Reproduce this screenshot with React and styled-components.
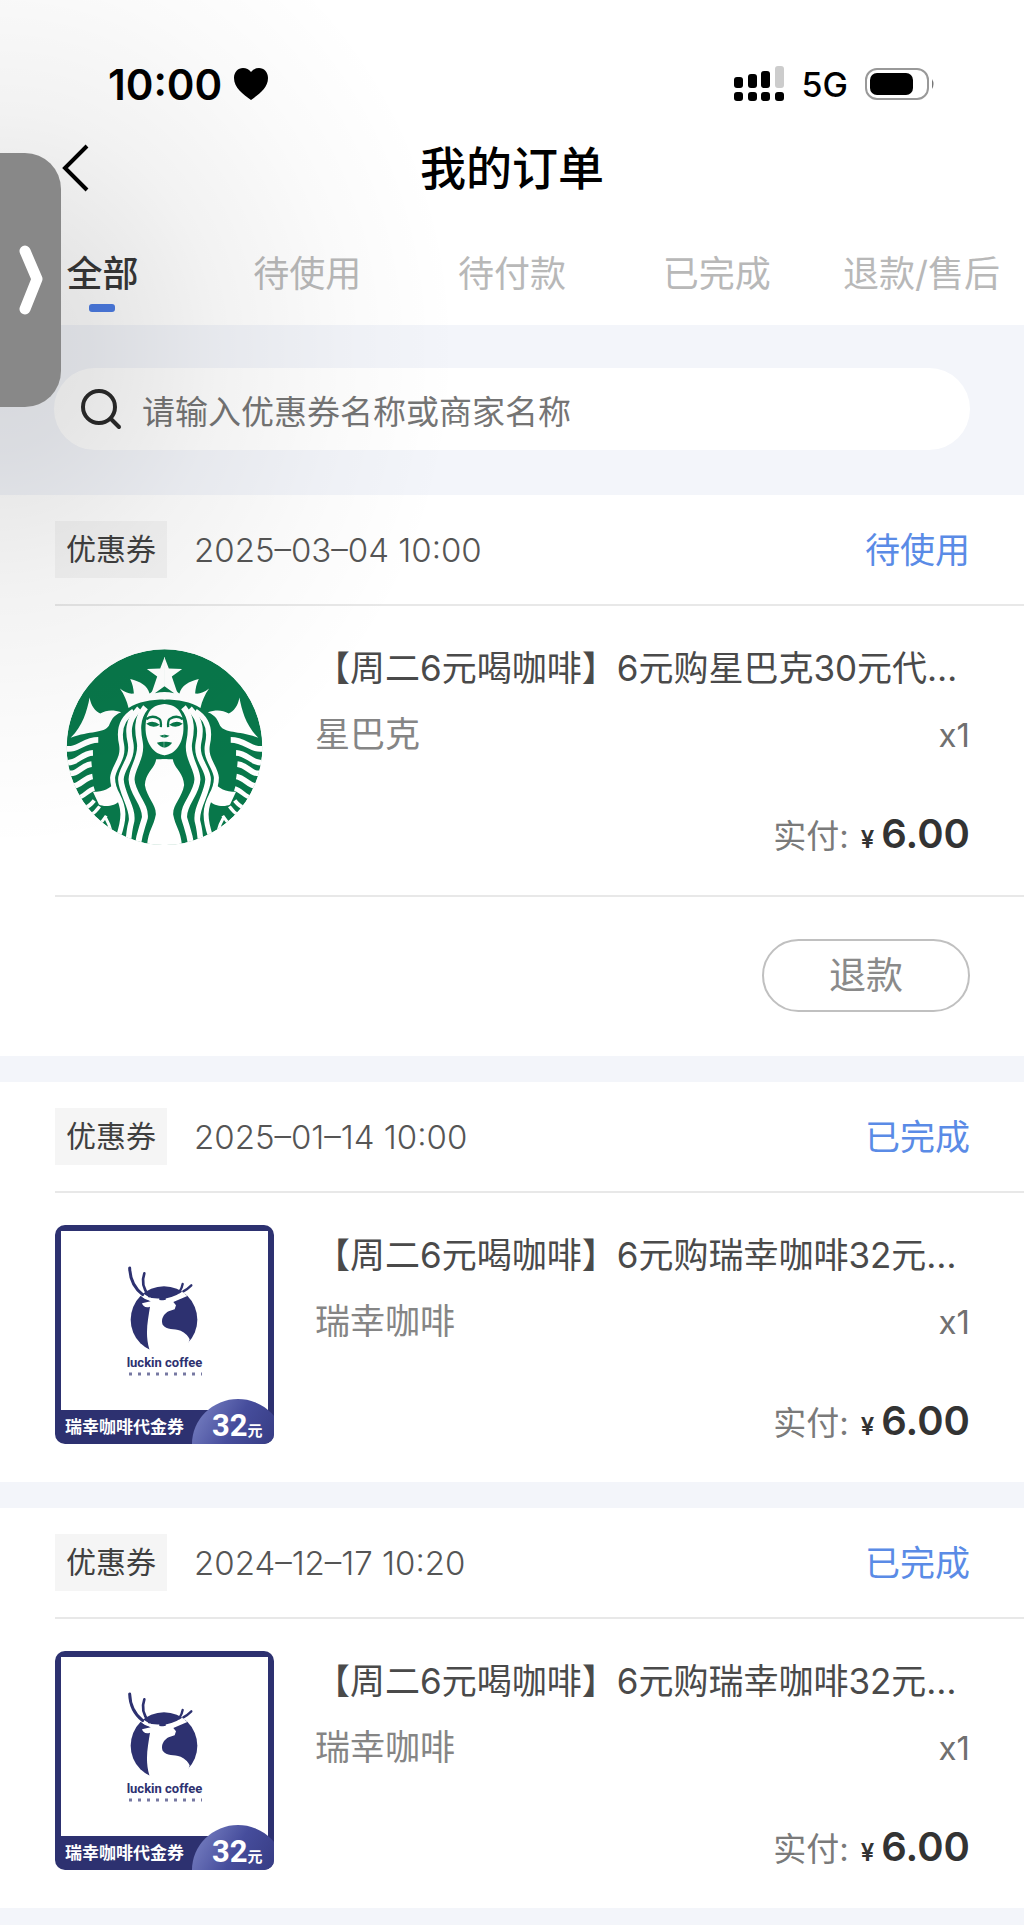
import React, { useState } from "react";
import styled, { createGlobalStyle } from "styled-components";

const GlobalStyle = createGlobalStyle`
  * {
    box-sizing: border-box;
  }

  body {
    margin: 0;
    background: #f3f5fa;
    font-family: Inter, "Noto Sans CJK SC", sans-serif;
    color: #333;
  }

  button,
  input {
    font-family: inherit;
  }

  h1,
  h2,
  p {
    margin: 0;
    font-weight: 400;
  }
`;

const tabs = ["全部", "待使用", "待付款", "已完成", "退款/售后"];

const orders = [
  {
    id: 1,
    date: "2025–03–04 10:00",
    status: "待使用",
    title: "【周二6元喝咖啡】6元购星巴克30元代…",
    shop: "星巴克",
    brand: "starbucks",
    price: "6.00",
    refundable: true,
  },
  {
    id: 2,
    date: "2025–01–14 10:00",
    status: "已完成",
    title: "【周二6元喝咖啡】6元购瑞幸咖啡32元…",
    shop: "瑞幸咖啡",
    brand: "luckin",
    price: "6.00",
  },
  {
    id: 3,
    date: "2024–12–17 10:20",
    status: "已完成",
    title: "【周二6元喝咖啡】6元购瑞幸咖啡32元…",
    shop: "瑞幸咖啡",
    brand: "luckin",
    price: "6.00",
  },
];

const SirenHalf = () => (
  <g>
    {/* crown */}
    <path
      fill="#fff"
      d="M343 78L330 112L290 113L321 136L307 177C305 182 302 185 298 187C292 163 270 150 240 143C247 158 250 172 251 187C238 189 224 184 209 172C222 190 230 210 235 230C265 212 300 205 346 205V182Q328 182 314 186L344 164V78Z"
    />
    {/* tail fin */}
    <path
      fill="#fff"
      d="M118 199C122 225 135 240 150 247C170 235 190 236 213 243C187 253 182 270 176 284C160 308 120 298 61 320C98 284 110 240 118 199Z"
    />
    {/* scales */}
    <g fill="none" stroke="#fff" strokeWidth="17">
      <path d="M44 352C82 360 98 326 144 326" />
      <path d="M44 394C80 400 92 366 128 365" />
      <path d="M52 426C84 432 92 402 124 399" />
      <path d="M62 466C90 468 100 440 127 436" />
      <path d="M82 500C100 498 112 478 132 472" strokeWidth="14" />
      <path d="M98 534Q118 526 132 508" strokeWidth="12" />
      <path d="M118 554Q136 544 148 526" strokeWidth="10" />
      <path d="M144 582Q158 570 168 554" strokeWidth="9" />
      <path d="M184 606Q178 580 166 560" strokeWidth="9" />
    </g>
    <path fill="#fff" d="M128 482C160 482 180 472 194 454L208 508C196 526 160 528 146 520Z" />
    {/* hair */}
    <g fill="none" stroke="#fff">
      <path d="M250 240C210 265 206 305 214 340C222 385 190 405 187 440Q187 466 202 492C222 530 224 560 204 618" strokeWidth="15" />
      <path d="M267 232C230 270 234 305 241 335C250 385 212 410 212 445C214 490 250 530 244 570Q236 600 234 640" strokeWidth="17" />
      <path d="M286 228C258 262 262 300 269 335C276 380 244 410 244 445C246 490 288 520 284 560C276 590 266 610 262 650" strokeWidth="18" />
    </g>
    <path fill="#fff" d="M352 384H318C314 412 286 424 284 462C290 500 318 520 317 550C310 590 290 600 290 660H352Z" />
    {/* face */}
    <path fill="#fff" d="M345 218C300 220 286 248 286 290C286 335 310 372 345 372Z" />
    <path fill="none" stroke="#08774a" strokeWidth="7" d="M288 264Q306 250 327 263Q334 268 332 288" />
    <path fill="#08774a" d="M288 278Q307 264 329 281Q308 294 288 278ZM328 314L344 310V320Q336 320 328 314ZM320 335Q334 330 344 332V350Q330 348 320 335Z" />
  </g>
);

const StarbucksLogo = () => (
  <svg width="219" height="219" viewBox="14 20 658 658" role="img" aria-label="星巴克">
    <clipPath id="disc">
      <circle cx="343" cy="348" r="294" />
    </clipPath>
    <g clipPath="url(#disc)">
      <circle cx="343" cy="348" r="294" fill="#08774a" />
      <SirenHalf />
      <g transform="translate(686 0) scale(-1 1)">
        <SirenHalf />
      </g>
    </g>
  </svg>
);

const LuckinDeer = () => (
  <svg width="74" height="88" viewBox="262 165 222 264" role="img" aria-label="瑞幸咖啡">
    <circle cx="370" cy="329" r="100" fill="#2d3170" />
    <path
      fill="#fff"
      d="M326 418C312 370 322 330 328 290C316 296 306 288 304 280L330 274L306 262L310 252Q340 274 372 270L430 250L440 258L398 276L406 286L402 298L384 304C368 312 360 330 366 344C378 362 400 354 420 362Q440 372 447 388L430 440H326Z"
    />
    <path fill="none" stroke="#fff" strokeWidth="9" d="M290 240Q310 272 356 270M376 270Q415 262 440 238" />
    <g fill="none" stroke="#2d3170" strokeLinecap="round">
      <path d="M267 174C268 206 278 232 306 254" strokeWidth="9" />
      <path d="M311 190C302 215 308 238 326 258" strokeWidth="8" />
      <path d="M452 226Q440 238 428 244M426 222Q424 234 416 246" strokeWidth="7" />
    </g>
  </svg>
);

const LuckinVoucher = () => (
  <Voucher>
    <VoucherBody>
      <LuckinDeer />
      <Brand>luckin coffee</Brand>
      <Slogan aria-hidden="true" width="74" height="4" viewBox="0 0 74 4">
        <path d="M1 2H74" stroke="#2d3170" strokeWidth="3" strokeDasharray="3 6" opacity="0.65" />
      </Slogan>
    </VoucherBody>
    <VoucherFooter>瑞幸咖啡代金券</VoucherFooter>
    <Amount>
      32<small>元</small>
    </Amount>
  </Voucher>
);

const StatusBar = () => (
  <StatusRow>
    <Clock>
      10:00
      <svg width="36" height="34" viewBox="0 0 36 34" aria-hidden="true">
        <path d="M18 33C10 27 1 21 1 11C1 5 5 1 10 1Q15 1 18 5Q21 1 26 1C31 1 35 5 35 11C35 21 26 27 18 33Z" />
      </svg>
    </Clock>
    <Signals>
      <svg width="51" height="36" viewBox="0 0 51 36" aria-hidden="true">
        <rect x="0" y="11" width="9" height="11" rx="3" />
        <rect x="14" y="8" width="9" height="14" rx="3" />
        <rect x="27" y="5" width="9" height="17" rx="3" />
        <rect x="41" y="0" width="9" height="22" rx="3" fill="#ccc" />
        <rect x="0" y="26" width="9" height="9" rx="3" />
        <rect x="14" y="26" width="9" height="9" rx="3" />
        <rect x="27" y="26" width="9" height="9" rx="3" />
        <rect x="41" y="26" width="9" height="9" rx="3" />
      </svg>
      <span>5G</span>
      <svg width="70" height="34" viewBox="0 0 70 34" aria-hidden="true">
        <rect x="1" y="2" width="62" height="30" rx="11" fill="none" stroke="#999" strokeWidth="2" />
        <rect x="5" y="6" width="43" height="22" rx="7" />
        <path d="M67 12Q70 17 67 22Z" fill="#777" />
      </svg>
    </Signals>
  </StatusRow>
);

const OrderCard = ({ order }) => (
  <Card>
    <CardHeader>
      <Tag>优惠券</Tag>
      <DateText>{order.date}</DateText>
      <OrderStatus>{order.status}</OrderStatus>
    </CardHeader>

    <CardBody>
      {order.brand === "starbucks" ? <StarbucksLogo /> : <LuckinVoucher />}
      <Info>
        <Title>{order.title}</Title>
        <ShopRow>
          <span>{order.shop}</span>
          <Count>x1</Count>
        </ShopRow>
        <Paid>
          实付:
          <Yen>¥</Yen>
          <Price>{order.price}</Price>
        </Paid>
      </Info>
    </CardBody>

    {order.refundable && (
      <CardFooter>
        <RefundButton type="button">退款</RefundButton>
      </CardFooter>
    )}
  </Card>
);

const App = () => {
  const [active, setActive] = useState(tabs[0]);
  const [keyword, setKeyword] = useState("");

  return (
    <Page>
      <GlobalStyle />
      <TopArea>
        <StatusBar />
        <NavBar>
          <BackButton type="button" aria-label="返回">
            <svg width="28" height="48" viewBox="0 0 28 48">
              <path d="M25 2L3 24L25 46" fill="none" stroke="#000" strokeWidth="4" />
            </svg>
          </BackButton>
          <PageTitle>我的订单</PageTitle>
        </NavBar>
        <Tabs>
          {tabs.map((tab) => (
            <Tab key={tab} type="button" $active={tab === active} onClick={() => setActive(tab)}>
              {tab}
            </Tab>
          ))}
        </Tabs>
      </TopArea>

      <SearchArea>
        <SearchBox>
          <svg width="42" height="42" viewBox="0 0 42 42" aria-hidden="true">
            <circle cx="19" cy="19" r="16" fill="none" stroke="#2b2b2b" strokeWidth="4" />
            <path d="M31 31L39 39" stroke="#2b2b2b" strokeWidth="4" strokeLinecap="round" />
          </svg>
          <SearchInput
            aria-label="搜索订单"
            placeholder="请输入优惠券名称或商家名称"
            value={keyword}
            onChange={(e) => setKeyword(e.target.value)}
          />
        </SearchBox>
      </SearchArea>

      <OrderList>
        {orders.map((order) => (
          <OrderCard key={order.id} order={order} />
        ))}
      </OrderList>

      <Shade />
      <Drawer type="button" aria-label="展开侧栏">
        <svg width="24" height="70" viewBox="0 0 24 70">
          <path d="M6 6L18 34L6 64" fill="none" stroke="#fff" strokeWidth="11" strokeLinecap="round" strokeLinejoin="round" />
        </svg>
      </Drawer>
    </Page>
  );
};

const Page = styled.div`
  position: relative;
  min-height: 100vh;
  overflow: hidden;
`;

const TopArea = styled.header`
  background: #fff;
`;

const StatusRow = styled.div`
  display: flex;
  justify-content: space-between;
  align-items: center;
  height: 124px;
  padding: 44px 89px 0 108px;
`;

const Clock = styled.div`
  display: flex;
  align-items: center;
  gap: 11px;
  font-size: 42px;
  font-weight: 600;
  color: #000;
`;

const Signals = styled.div`
  display: flex;
  align-items: center;
  gap: 17px;
  font-size: 34px;
  font-weight: 500;
  color: #000;
`;

const NavBar = styled.div`
  display: grid;
  grid-template-columns: 1fr auto 1fr;
  align-items: center;
  height: 88px;
  padding: 0 62px;
`;

const BackButton = styled.button`
  display: flex;
  justify-self: start;
  padding: 0;
  border: 0;
  background: none;
  cursor: pointer;
`;

const PageTitle = styled.h1`
  font-size: 46px;
  font-weight: 500;
  line-height: 60px;
  color: #000;
`;

const Tabs = styled.nav`
  display: grid;
  grid-template-columns: repeat(5, 1fr);
  height: 113px;
`;

const Tab = styled.button`
  display: flex;
  flex-direction: column;
  align-items: center;
  gap: 5px;
  padding: 37px 0 0;
  border: 0;
  background: none;
  font-size: 36px;
  line-height: 50px;
  font-weight: ${(props) => (props.$active ? 500 : 400)};
  color: ${(props) => (props.$active ? "#383838" : "#b8b8b8")};
  white-space: nowrap;
  cursor: pointer;

  &::after {
    content: "";
    width: 26px;
    height: 8px;
    border-radius: 3px;
    background: ${(props) => (props.$active ? "#4d7de6" : "transparent")};
  }
`;

const SearchArea = styled.div`
  padding: 43px 54px 45px;
`;

const SearchBox = styled.label`
  display: flex;
  align-items: center;
  gap: 20px;
  height: 82px;
  padding: 0 26px;
  border-radius: 41px;
  background: #fff;
`;

const SearchInput = styled.input`
  flex: 1;
  min-width: 0;
  padding: 6px 0 0;
  border: 0;
  outline: 0;
  background: none;
  font-size: 33px;
  color: #333;

  &::placeholder {
    color: #757575;
    opacity: 1;
  }
`;

const OrderList = styled.main`
  display: flex;
  flex-direction: column;
  gap: 26px;
`;

const Card = styled.article`
  padding-left: 55px;
  background: #fff;
`;

const CardHeader = styled.header`
  display: flex;
  align-items: center;
  height: 111px;
  padding-right: 54px;
  border-bottom: 2px solid #e8e8e8;
`;

const Tag = styled.span`
  padding: 0 11px;
  background: #f5f5f5;
  font-size: 30px;
  line-height: 57px;
  color: #404040;
`;

const DateText = styled.time`
  margin-left: 27px;
  font-size: 33px;
  font-weight: 300;
  line-height: 48px;
  color: #555;
`;

const OrderStatus = styled.span`
  margin-left: auto;
  font-size: 35px;
  line-height: 48px;
  color: #5a8be6;
`;

const CardBody = styled.div`
  display: flex;
  gap: 41px;
  padding: 32px 54px 38px 0;

  > :first-child {
    flex: none;
  }
`;

const Info = styled.div`
  display: flex;
  flex: 1;
  flex-direction: column;
  min-width: 0;
`;

const Title = styled.h2`
  font-size: 35px;
  line-height: 60px;
  color: #4a4a4a;
  white-space: nowrap;
`;

const ShopRow = styled.div`
  display: flex;
  justify-content: space-between;
  align-items: baseline;
  font-size: 35px;
  line-height: 73px;
  color: #858585;
`;

const Count = styled.span`
  font-size: 33px;
  color: #707070;
`;

const Paid = styled.p`
  display: flex;
  justify-content: flex-end;
  align-items: baseline;
  margin-top: auto;
  font-size: 33px;
  line-height: 34px;
  color: #7a7a7a;
`;

const Yen = styled.span`
  margin: 0 7px 0 12px;
  font-size: 24px;
  font-weight: 600;
  color: #333;
`;

const Price = styled.strong`
  font-size: 40px;
  font-weight: 600;
  color: #333;
`;

const CardFooter = styled.footer`
  display: flex;
  justify-content: flex-end;
  padding: 42px 54px 44px 0;
  border-top: 2px solid #e8e8e8;
`;

const RefundButton = styled.button`
  width: 208px;
  height: 73px;
  padding: 0;
  border: 2px solid #c0c0c0;
  border-radius: 37px;
  background: none;
  font-size: 37px;
  line-height: 48px;
  color: #8a8a8a;
  cursor: pointer;
`;

const Voucher = styled.div`
  position: relative;
  display: flex;
  flex-direction: column;
  width: 219px;
  height: 219px;
  overflow: hidden;
  border-radius: 10px;
  background: #2d3170;
`;

const VoucherBody = styled.div`
  display: flex;
  flex: 1;
  flex-direction: column;
  align-items: center;
  margin: 6px 6px 0;
  padding-top: 34px;
  background: #fff;
`;

const Brand = styled.span`
  margin-top: 2px;
  font-family: Roboto, sans-serif;
  font-size: 13px;
  font-weight: 700;
  line-height: 16px;
  color: #2d3170;
`;

const Slogan = styled.svg`
  margin-top: 1px;
`;

const VoucherFooter = styled.div`
  padding-left: 10px;
  font-size: 17px;
  font-weight: 700;
  line-height: 34px;
  color: #fff;
`;

const Amount = styled.div`
  position: absolute;
  right: -10px;
  bottom: 0;
  width: 92px;
  height: 45px;
  padding-left: 20px;
  border-radius: 50% 50% 0 0 / 100% 100% 0 0;
  background: linear-gradient(120deg, #7f88c8, #464d9c 50%, #34397f);
  font-family: Roboto, "Noto Sans CJK SC", sans-serif;
  font-size: 31px;
  font-weight: 700;
  line-height: 54px;
  color: #fff;

  small {
    font-size: 15px;
  }
`;

/* soft shadow cast by the side drawer */
const Shade = styled.div`
  position: absolute;
  top: 0;
  left: 0;
  width: 500px;
  height: 900px;
  background: radial-gradient(
    460px 500px at 0 350px,
    rgba(0, 0, 0, 0.12),
    rgba(0, 0, 0, 0.1) 20%,
    rgba(0, 0, 0, 0.05) 48%,
    rgba(0, 0, 0, 0.02) 75%,
    transparent
  );
  pointer-events: none;
`;

const Drawer = styled.button`
  position: absolute;
  top: 153px;
  left: 0;
  display: flex;
  justify-content: flex-end;
  align-items: center;
  width: 61px;
  height: 254px;
  padding: 0 18px 0 0;
  border: 0;
  border-radius: 0 36px 36px 0;
  background: #888;
  cursor: pointer;
`;

export default App;
